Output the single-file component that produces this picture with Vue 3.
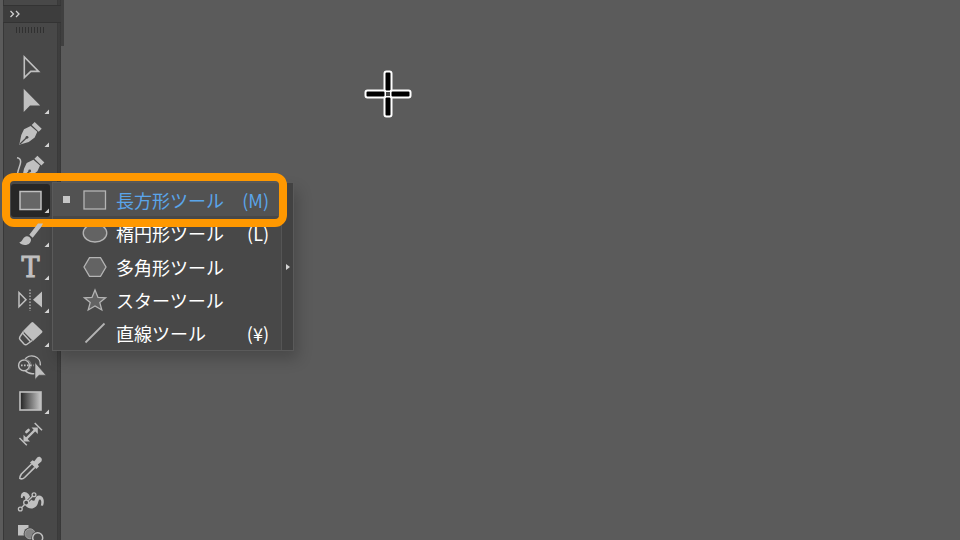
<template>
  <div class="workspace">
    <aside class="toolbar">
      <button type="button" class="collapse" aria-label="パネルを展開">
        <svg viewBox="0 0 12 8" width="12" height="8">
          <path d="M1.5 1 L4.5 4 L1.5 7 M7 1 L10 4 L7 7" fill="none" stroke="#d0d0d0" stroke-width="1.3" />
        </svg>
      </button>
      <div class="gripper"></div>

      <div class="groups">
        <div v-for="(group, i) in groups" :key="i" class="group">
          <div v-for="tool in group" :key="tool.id" class="slot">
            <button
              type="button"
              class="tool"
              :class="{ active: tool.id === activeTool }"
              :aria-label="tool.label"
              @click="activeTool = tool.id"
            >
              <svg class="tool-icon" viewBox="0 0 37 33" width="37" height="33">
                <g v-html="tool.icon"></g>
                <path v-if="tool.more" class="corner" d="M37 24.5 V29 H32.5 Z" />
              </svg>
            </button>

            <!-- Submenú de formas, anclado a la herramienta rectángulo -->
            <template v-if="tool.id === 'rect'">
              <div class="flyout">
                <div class="shapes" role="menu">
                  <button
                    v-for="shape in shapes"
                    :key="shape.id"
                    type="button"
                    role="menuitem"
                    class="shape"
                    :class="{ selected: shape.id === activeShape }"
                    @click="activeShape = shape.id"
                  >
                    <span class="mark"></span>
                    <svg class="shape-icon" viewBox="0 0 24 24" width="24" height="24" v-html="shape.icon"></svg>
                    <span class="name">{{ shape.name }}</span>
                    <span class="key">{{ shape.key }}</span>
                  </button>
                </div>
                <button type="button" class="tearoff" aria-label="切り離す">
                  <svg viewBox="0 0 4 6" width="4" height="6"><path d="M0 0 L4 3 L0 6 Z" fill="#d4d4d4" /></svg>
                </button>
              </div>
              <div class="highlight"></div>
            </template>
          </div>
        </div>
      </div>
    </aside>
    <div class="edge"></div>

    <main class="canvas">
      <svg class="crosshair" viewBox="0 0 48 48" width="48" height="48">
        <g fill="#000" stroke="#fff" stroke-width="2">
          <rect x="20.5" y="1.5" width="7" height="20" rx="2" />
          <rect x="20.5" y="26.5" width="7" height="20" rx="2" />
          <rect x="1.5" y="20.5" width="20" height="7" rx="2" />
          <rect x="26.5" y="20.5" width="20" height="7" rx="2" />
        </g>
        <rect x="21.5" y="21.5" width="5" height="5" fill="#444" stroke="#fff" stroke-width="1" />
      </svg>
    </main>
  </div>
</template>

<script setup>
import { ref } from 'vue';

const activeTool = ref('rect');
const activeShape = ref('rect');

const c = '#c0c0c0';

const pen = `
  <path fill="${c}" d="M7.3 26.7 L9.3 17 L12 11.3 L18.7 8 L25.3 13.7 L22.7 19.6 L16.7 24 Z M19.7 7 L22.7 4 L29.7 10.7 L26.7 13.7 Z"/>
  <path stroke="#484848" stroke-width="1.2" d="M8 26 L15 19.3"/><circle cx="15" cy="19.3" r="1.4" fill="#484848"/>`;

// Herramientas agrupadas de arriba abajo
const groups = [
  [
    {
      id: 'select',
      label: '選択ツール',
      icon: `<path fill="none" stroke="${c}" stroke-width="1.6" d="M12.3 6 V26.6 L18.8 20.4 H26.6 Z"/>`,
    },
  ],
  [
    {
      id: 'direct',
      label: 'ダイレクト選択ツール',
      more: true,
      icon: `<path fill="${c}" d="M11.7 3.7 V27 L18 20.6 H28.2 Z"/>`,
    },
    { id: 'pen', label: 'ペンツール', more: true, icon: pen },
    {
      id: 'curve',
      label: '曲線ツール',
      icon: `<g transform="translate(2.7 0.7)">${pen}</g>
        <path fill="none" stroke="${c}" stroke-width="1.5" d="M5 6.8 C10.5 7.5 8.5 13 7 17 S6 22 5 24"/>`,
    },
    {
      id: 'rect',
      label: '長方形ツール',
      more: true,
      icon: `<rect x="8" y="7.5" width="21" height="18" fill="#666" stroke="${c}" stroke-width="1.5"/>`,
    },
  ],
  [
    {
      id: 'brush',
      label: 'ブラシツール',
      more: true,
      icon: `<path fill="${c}" d="M26 5.5 H31 L29 9.3 L20.7 19.8 L17.3 16.7 Z M7.3 24.2 C10.5 23.6 10.5 20.5 12.5 19.2 C14.5 17.4 18 18.2 19 21.4 C19 24.8 16.5 26.8 13 27 C10.5 27 8.5 26 7.3 24.2 Z"/>`,
    },
    {
      id: 'type',
      label: '文字ツール',
      more: true,
      icon: `<text x="18.5" y="26" text-anchor="middle" font-family="DejaVu Serif, serif" font-size="27" fill="${c}" stroke="${c}" stroke-width="1">T</text>`,
    },
    {
      id: 'reflect',
      label: 'リフレクトツール',
      more: true,
      icon: `<path fill="none" stroke="${c}" stroke-width="1.5" d="M7 8.6 V22.8 L14 15.8 Z"/>
        <path fill="${c}" d="M30 7.6 V23.6 L21 15.8 Z"/>
        <path stroke="${c}" stroke-width="1.2" stroke-dasharray="1.6 1.4" d="M18 5.5 V27"/>`,
    },
  ],
  [
    {
      id: 'eraser',
      label: '消しゴムツール',
      more: true,
      icon: `<path fill="${c}" d="M19.4 4.6 Q20.4 3.6 21.4 4.6 L30 12.8 Q31 13.8 30 14.7 L21 23 L11 13 Z"/>
        <path fill="none" stroke="${c}" stroke-width="1.5" stroke-linejoin="round" d="M11.5 13.5 L8 18.6 Q7 20.2 8 21.6 L12 26 Q13.6 27.4 15.4 26 L20.3 22.5"/>
        <path stroke="${c}" stroke-width="1.5" d="M10.5 15 L18.4 23.4"/>`,
    },
    {
      id: 'builder',
      label: 'シェイプ形成ツール',
      icon: `<circle cx="12" cy="14.4" r="5.4" fill="none" stroke="${c}" stroke-width="1.4"/>
        <path fill="none" stroke="${c}" stroke-width="1.4" d="M12.5 9 A8.6 8.6 0 0 1 28.4 14.4 M13 19.6 Q17 23.6 22.4 22.6"/>
        <path fill="none" stroke="#808080" stroke-width="1.1" d="M12 9 A5.4 5.4 0 0 1 16 19"/>
        <path stroke="${c}" stroke-width="1.6" stroke-dasharray="1.6 1.4" d="M9 14.4 H21.5"/>
        <path fill="${c}" stroke="#484848" stroke-width="0.6" d="M23 11.5 V28.4 L27 24.2 H34 Z"/>`,
    },
  ],
  [
    {
      id: 'gradient',
      label: 'グラデーションツール',
      more: true,
      icon: `<defs><linearGradient id="ramp"><stop offset="0" stop-color="#222"/><stop offset="1" stop-color="#c8c8c8"/></linearGradient></defs>
        <rect x="8" y="7" width="21" height="18" fill="url(#ramp)" stroke="${c}" stroke-width="1.6"/>`,
    },
    {
      id: 'measure',
      label: '寸法ツール',
      icon: `<path stroke="${c}" stroke-width="1.5" d="M22.7 5 L30 12.2 M7.5 20 L14.8 27.3"/>
        <path stroke="${c}" stroke-width="2.4" d="M14 21 L24 11"/>
        <path fill="${c}" d="M19.5 9.5 H25.8 V16 Z M11.5 16.8 V23.4 H18 Z"/>
        <path stroke="${c}" stroke-width="2.6" stroke-linecap="round" d="M14.4 14 L16.6 12"/>`,
    },
  ],
  [
    {
      id: 'dropper',
      label: 'スポイトツール',
      icon: `<path fill="${c}" d="M18 10.6 L20.5 8.2 L22.3 9.3 L25.2 5.6 C27.5 3.2 31.2 6.6 29.4 9.4 L25.8 12.6 L27 14.4 L24.4 17 Z"/>
        <path fill="none" stroke="${c}" stroke-width="1.6" stroke-linejoin="round" d="M19.6 12 L9.4 22 Q7.6 24.8 7.8 26.4 Q10 27.8 12.6 25.5 L22.8 15.4"/>`,
    },
    {
      id: 'puppet',
      label: 'パペットワープツール',
      icon: `<path fill="${c}" d="M9 13 C8 7 13 5 16.5 9 C19 12 18 15.5 22 15.8 C23.6 14.8 23 10.6 27 10.4 C31.5 10.6 33 16 31 20.8 L28.8 20.4 C30 17 29 14.2 27.6 14.6 C25.6 15.6 27 22 20.5 23.4 C15 24 12 20.6 13.4 15.6 C13.6 12 11.4 9 10.6 13 Z"/>
        <path stroke="#484848" stroke-width="3" d="M10.5 21.5 L20 12"/>
        <path stroke="${c}" stroke-width="1.3" d="M9.5 22.8 L21 10.8"/>
        <g fill="#484848" stroke="${c}" stroke-width="1.3"><circle cx="8.3" cy="24" r="1.9"/><circle cx="14.2" cy="17.6" r="2.5"/><circle cx="22" cy="9.8" r="1.9"/></g>`,
    },
  ],
  [
    {
      id: 'blend',
      label: 'ブレンドツール',
      icon: `<rect x="6" y="6" width="10.5" height="10.5" fill="${c}"/>
        <circle cx="18" cy="14.8" r="6.4" fill="#484848"/>
        <circle cx="18" cy="14.8" r="5" fill="#858585" stroke="#a0a0a0" stroke-width="1"/>
        <circle cx="25.7" cy="18.7" r="6.4" fill="#484848"/>
        <circle cx="25.7" cy="18.7" r="5" fill="#484848" stroke="${c}" stroke-width="1.5"/>`,
    },
  ],
];

const outline = `fill="#636363" stroke="#b4b4b4" stroke-width="1.3"`;

const shapes = [
  { id: 'rect', name: '長方形ツール', key: '(M)', icon: `<rect x="1" y="3" width="21.5" height="18" ${outline}/>` },
  { id: 'ellipse', name: '楕円形ツール', key: '(L)', icon: `<ellipse cx="12" cy="12" rx="11.8" ry="9" ${outline}/>` },
  { id: 'polygon', name: '多角形ツール', key: '', icon: `<path d="M6.5 2.6 H17.5 L23 12 L17.5 21.4 H6.5 L1 12 Z" ${outline}/>` },
  {
    id: 'star',
    name: 'スターツール',
    key: '',
    icon: `<path d="M12 2 L15 9.4 L22.6 9.8 L16.8 14.6 L18.8 22 L12 18 L5.2 22 L7.2 14.6 L1.4 9.8 L9 9.4 Z" ${outline}/>`,
  },
  { id: 'line', name: '直線ツール', key: '(¥)', icon: `<path d="M2.5 21.5 L21.5 2.5" stroke="#b4b4b4" stroke-width="1.8"/>` },
];
</script>

<style>
body {
  background: #5b5b5b;
}
</style>

<style scoped>
.workspace {
  display: flex;
  height: 100vh;
  overflow: hidden;
  background: #5b5b5b;
  font-family: "Noto Sans CJK JP", sans-serif;
}

button {
  margin: 0;
  padding: 0;
  border: 0;
  background: none;
  color: inherit;
  font: inherit;
  cursor: pointer;
}

svg {
  display: block;
  flex: none;
  overflow: visible;
}

.toolbar {
  position: relative;
  z-index: 1;
  box-sizing: border-box;
  width: 61px;
  flex: none;
  padding-top: 5px;
  border-left: 3px solid #5b5b5b;
  background: linear-gradient(to right, #383838 1px, #484848 1px, #484848 54px, #383838 54px, #404040 56px, #363636 58px);
}

.collapse {
  display: flex;
  align-items: center;
  width: 58px;
  height: 18px;
  padding-left: 6px;
  border-top: 1px solid #333333;
  border-bottom: 1px solid #333333;
  background: #3d3d3d;
}

.gripper {
  width: 28px;
  height: 6px;
  margin: 4px 0 18px 13px;
  background: repeating-linear-gradient(to right, #303030 0, #303030 1px, #484848 1px, #484848 3px);
}

.groups {
  display: flex;
  flex-direction: column;
  gap: 1px;
}

.slot {
  position: relative;
  height: 33px;
}

.tool {
  display: flex;
  align-items: center;
  box-sizing: border-box;
  width: 39px;
  height: 33px;
  margin-left: 8px;
  padding: 1px;
}

.tool.active {
  border-radius: 3px;
  background: #272727;
}

.corner {
  fill: #d4d4d4;
}

.edge {
  width: 3px;
  height: 46px;
  background: #404040;
}

/* Menú desplegable sobre el lienzo */
.flyout {
  position: absolute;
  top: -2px;
  left: 49px;
  display: flex;
  box-sizing: border-box;
  width: 242px;
  height: 169px;
  border: 1px solid #5a5a5a;
  background: #484848;
  box-shadow: 4px 8px 14px rgba(0, 0, 0, 0.2);
}

.shapes {
  display: flex;
  flex: 1;
  flex-direction: column;
}

.shape {
  display: flex;
  flex: 1;
  align-items: center;
  padding: 0 12px 0 10px;
  color: #ffffff;
  font-size: 18px;
  font-weight: 400;
  line-height: 24px;
}

.mark {
  width: 7px;
  height: 7px;
  margin-right: 13px;
}

.shape-icon {
  margin-right: 9px;
}

.name {
  flex: 1;
  text-align: left;
  white-space: nowrap;
}

.selected {
  background: #525252;
  color: #5aa5ea;
}

.selected .mark {
  background: #c6c6c6;
}

.tearoff {
  display: flex;
  align-items: center;
  justify-content: center;
  width: 12px;
  border-left: 1px solid #555555;
  background: #424242;
}

.highlight {
  position: absolute;
  top: -11px;
  left: -1px;
  box-sizing: border-box;
  width: 285px;
  height: 54px;
  border: 8px solid #ff9800;
  border-radius: 12px;
  pointer-events: none;
}

.canvas {
  position: relative;
  flex: 1;
}

.crosshair {
  position: absolute;
  top: 70px;
  left: 300px;
}
</style>
